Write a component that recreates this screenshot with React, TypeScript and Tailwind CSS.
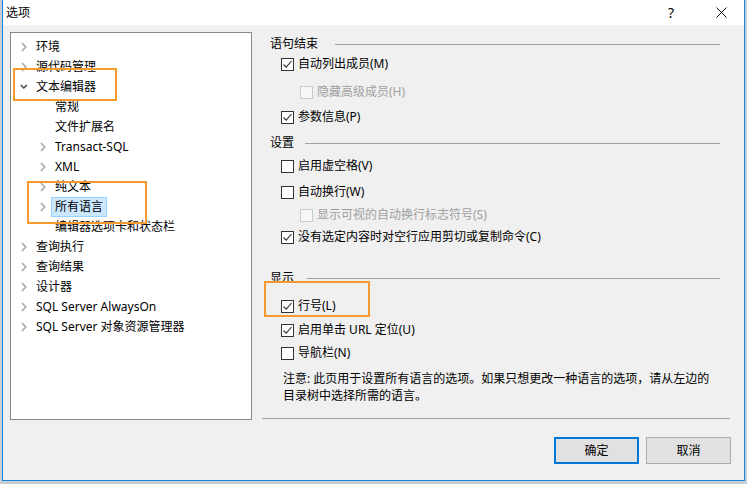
import React from 'react'

const font = { fontFamily: '"Noto Sans", "Noto Sans CJK SC", sans-serif' }

type Node = { label: string; level: 0 | 1; chevron: 'closed' | 'open' | null; selected?: boolean }

const tree: Node[] = [
  { label: '环境', level: 0, chevron: 'closed' },
  { label: '源代码管理', level: 0, chevron: 'closed' },
  { label: '文本编辑器', level: 0, chevron: 'open' },
  { label: '常规', level: 1, chevron: null },
  { label: '文件扩展名', level: 1, chevron: null },
  { label: 'Transact-SQL', level: 1, chevron: 'closed' },
  { label: 'XML', level: 1, chevron: 'closed' },
  { label: '纯文本', level: 1, chevron: 'closed' },
  { label: '所有语言', level: 1, chevron: 'closed', selected: true },
  { label: '编辑器选项卡和状态栏', level: 1, chevron: null },
  { label: '查询执行', level: 0, chevron: 'closed' },
  { label: '查询结果', level: 0, chevron: 'closed' },
  { label: '设计器', level: 0, chevron: 'closed' },
  { label: 'SQL Server AlwaysOn', level: 0, chevron: 'closed' },
  { label: 'SQL Server 对象资源管理器', level: 0, chevron: 'closed' },
]

function Chevron({ kind }: { kind: 'closed' | 'open' }) {
  if (kind === 'open') {
    return (
      <svg width="8" height="6" viewBox="0 0 8 6" className="ml-[1px]">
        <polyline points="0.8,1 3.8,4 6.8,1" fill="none" stroke="#404040" strokeWidth="1.4" />
      </svg>
    )
  }
  return (
    <svg width="6" height="10" viewBox="0 0 6 10" className="ml-[2px]">
      <polyline points="1,1 4.8,5 1,9" fill="none" stroke="#a6a6a6" strokeWidth="1.5" />
    </svg>
  )
}

function TreeRow({ node }: { node: Node }) {
  return (
    <div className={`h-[20px] flex items-center ${node.level === 0 ? 'pl-[8px]' : 'pl-[27px]'}`}>
      <div className="w-[17px] flex items-center">{node.chevron && <Chevron kind={node.chevron} />}</div>
      <span
        className={
          node.selected
            ? 'h-[20px] -ml-[4px] px-[3px] flex items-center bg-[#cce8ff] border border-[#99d1ff]'
            : 'whitespace-nowrap'
        }
      >
        {node.label}
      </span>
    </div>
  )
}

function Checkbox({ checked, disabled }: { checked?: boolean; disabled?: boolean }) {
  return (
    <div
      className={`w-[13px] h-[13px] border flex items-center justify-center ${
        disabled ? 'border-[#cccccc] bg-[#f7f7f7]' : 'border-[#333333] bg-white'
      }`}
    >
      {checked && (
        <svg width="11" height="11" viewBox="0 0 11 11">
          <polyline points="1.5,5.5 4.2,8.2 9.5,2" fill="none" stroke="#333333" strokeWidth="1.1" />
        </svg>
      )}
    </div>
  )
}

function Option({
  label,
  checked,
  disabled,
  indent,
  className = '',
}: {
  label: string
  checked?: boolean
  disabled?: boolean
  indent?: boolean
  className?: string
}) {
  return (
    <div className={`h-[20px] flex items-center gap-[4px] ${indent ? 'pl-[48px]' : 'pl-[29px]'} ${className}`}>
      <Checkbox checked={checked} disabled={disabled} />
      <span className={disabled ? 'text-[#a0a0a0]' : 'text-black'}>{label}</span>
    </div>
  )
}

function GroupHeader({ label, gap, className = '' }: { label: string; gap: string; className?: string }) {
  return (
    <div className={`h-[20px] flex items-center pl-[18px] w-[468px] ${className}`}>
      <span>{label}</span>
      <div className={`flex-1 h-px bg-[#a0a0a0] ${gap}`} />
    </div>
  )
}

export default function App() {
  return (
    <div className="w-[747px] h-[484px] bg-[#c9ced6] overflow-hidden text-[12px] text-black" style={font}>
      <div className="relative ml-[2px] w-[743px] h-[481px] flex flex-col border-l border-r border-b border-[#1883d7] bg-[#f0f0f0]">
        {/* title bar */}
        <div className="h-[25px] bg-white flex items-center shrink-0">
          <span className="pl-[3px] text-[12px]">选项</span>
          <span className="ml-auto mr-[42px] text-[14px] leading-none">?</span>
          <svg width="11" height="11" viewBox="0 0 11 11" className="mr-[17px]">
            <path d="M0.5 0.5 L10.5 10.5 M10.5 0.5 L0.5 10.5" stroke="#111" strokeWidth="1" />
          </svg>
        </div>

        {/* body */}
        <div className="flex items-start pl-[7px] pt-[7px]">
          <div className="w-[242px] h-[388px] bg-white border border-[#828790] pt-[4px] shrink-0">
            {tree.map((n) => (
              <TreeRow key={n.label} node={n} />
            ))}
          </div>

          <div className="flex flex-col">
            <GroupHeader label="语句结束" gap="ml-[17px]" className="mt-[2px]" />
            <Option label="自动列出成员(M)" checked />
            <Option label="隐藏高级成员(H)" disabled indent className="mt-[8px]" />
            <Option label="参数信息(P)" checked className="mt-[5px]" />

            <GroupHeader label="设置" gap="ml-[11px]" className="mt-[6px]" />
            <Option label="启用虚空格(V)" className="mt-[3px]" />
            <Option label="自动换行(W)" className="mt-[6px]" />
            <Option label="显示可视的自动换行标志符号(S)" disabled indent className="mt-[3px]" />
            <Option label="没有选定内容时对空行应用剪切或复制命令(C)" checked className="mt-[2px]" />

            <GroupHeader label="显示" gap="ml-[13px]" className="mt-[21px]" />
            <Option label="行号(L)" checked className="mt-[8px]" />
            <Option label="启用单击 URL 定位(U)" checked className="mt-[4px]" />
            <Option label="导航栏(N)" className="mt-[3px]" />

            <p className="mt-[7px] pl-[31px] w-[460px] leading-[17px]">
              注意: 此页用于设置所有语言的选项。如果只想更改一种语言的选项，请从左边的
              <br />
              目录树中选择所需的语言。
            </p>

            <div className="mt-[14px] ml-[10px] w-[468px] h-px bg-[#a0a0a0]" />

            <div className="mt-[18px] ml-[302px] flex gap-[7px]">
              <button className="w-[85px] h-[27px] bg-[#e1e1e1] border-2 border-[#0078d7] flex items-center justify-center">
                确定
              </button>
              <button className="w-[85px] h-[27px] bg-[#e1e1e1] border border-[#adadad] flex items-center justify-center">
                取消
              </button>
            </div>
          </div>
        </div>

        {/* annotation boxes */}
        <div className="absolute left-[10px] top-[68px] w-[104px] h-[33px] border-2 border-[#f79a2e]" />
        <div className="absolute left-[24px] top-[181px] w-[120px] h-[43px] border-2 border-[#f79a2e]" />
        <div className="absolute left-[261px] top-[281px] w-[106px] h-[36px] border-2 border-[#f79a2e]" />
      </div>
    </div>
  )
}
